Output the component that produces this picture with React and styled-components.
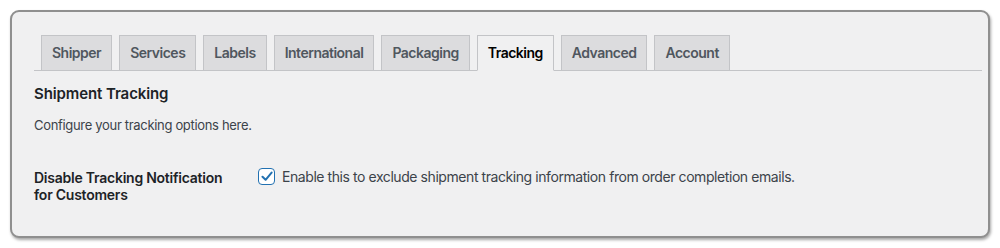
import React from "react";
import styled, { createGlobalStyle } from "styled-components";

const Global = createGlobalStyle`
  html, body { margin: 0; padding: 0; background: #ffffff; }
  body { font-family: Inter, "Noto Sans", "Liberation Sans", sans-serif; -webkit-font-smoothing: antialiased; }
  * { box-sizing: border-box; }
`;

const Frame = styled.div`
  margin: 10px;
  width: 980px;
  height: 228px;
  background: #f0f0f1;
  border: 2px solid #8f8f8f;
  border-radius: 9px;
  box-shadow: 1px 2px 3px rgba(0, 0, 0, 0.35);
  padding: 23px 6px 0 22px;
`;

const TabBar = styled.nav`
  display: flex;
  border-bottom: 1px solid #c3c4c7;
`;

const Tab = styled.a`
  display: block;
  margin-left: 7px;
  margin-bottom: -1px;
  padding: 5px 10px;
  border: 1px solid #c3c4c7;
  border-bottom: 1px solid ${(p) => (p.$active ? "#f0f0f1" : "#c3c4c7")};
  background: ${(p) => (p.$active ? "#f0f0f1" : "#dcdcde")};
  color: ${(p) => (p.$active ? "#000000" : "#50575e")};
  font-size: 14px;
  line-height: 24px;
  font-weight: 600;
  letter-spacing: -0.5px;
  text-decoration: none;
  white-space: nowrap;
`;

const Heading = styled.h2`
  margin: 12.5px 0 0;
  font-size: 15px;
  line-height: 20px;
  font-weight: 600;
  letter-spacing: -0.1px;
  color: #1d2327;
`;

const Description = styled.p`
  margin: 11.5px 0 0;
  font-size: 13px;
  line-height: 20px;
  letter-spacing: -0.32px;
  color: #3c434a;
`;

const FieldRow = styled.div`
  display: grid;
  grid-template-columns: 224px 1fr;
  margin-top: 33px;
  align-items: start;
`;

const FieldLabel = styled.label`
  font-size: 14px;
  line-height: 17px;
  margin-top: 0.5px;
  font-weight: 600;
  letter-spacing: -0.24px;
  color: #1d2327;
`;

const CheckLine = styled.label`
  display: flex;
  align-items: flex-start;
  gap: 7px;
  font-size: 14px;
  line-height: 18px;
  color: #3c434a;
`;

const Box = styled.span`
  flex: none;
  width: 17px;
  height: 17px;
  border: 1.5px solid #2271b1;
  border-radius: 4px;
  background: #ffffff;
  display: flex;
  align-items: center;
  justify-content: center;
`;

const CheckText = styled.span`
  display: block;
  letter-spacing: -0.43px;
`;

const tabs = [
  "Shipper",
  "Services",
  "Labels",
  "International",
  "Packaging",
  "Tracking",
  "Advanced",
  "Account",
];

export default function App() {
  return (
    <>
      <Global />
      <Frame>
        <TabBar>
          {tabs.map((t) => (
            <Tab key={t} $active={t === "Tracking"}>
              {t}
            </Tab>
          ))}
        </TabBar>
        <Heading>Shipment Tracking</Heading>
        <Description>Configure your tracking options here.</Description>
        <FieldRow>
          <FieldLabel>
            Disable Tracking Notification
            <br />
            for Customers
          </FieldLabel>
          <CheckLine>
            <Box>
              <svg width="12" height="11" viewBox="0 0 12 11">
                <path
                  d="M1.5 5.8 L4.6 8.8 L10.6 1.6"
                  fill="none"
                  stroke="#2271b1"
                  strokeWidth="2"
                  strokeLinecap="round"
                  strokeLinejoin="round"
                />
              </svg>
            </Box>
            <CheckText>
              Enable this to exclude shipment tracking information from order
              completion emails.
            </CheckText>
          </CheckLine>
        </FieldRow>
      </Frame>
    </>
  );
}
